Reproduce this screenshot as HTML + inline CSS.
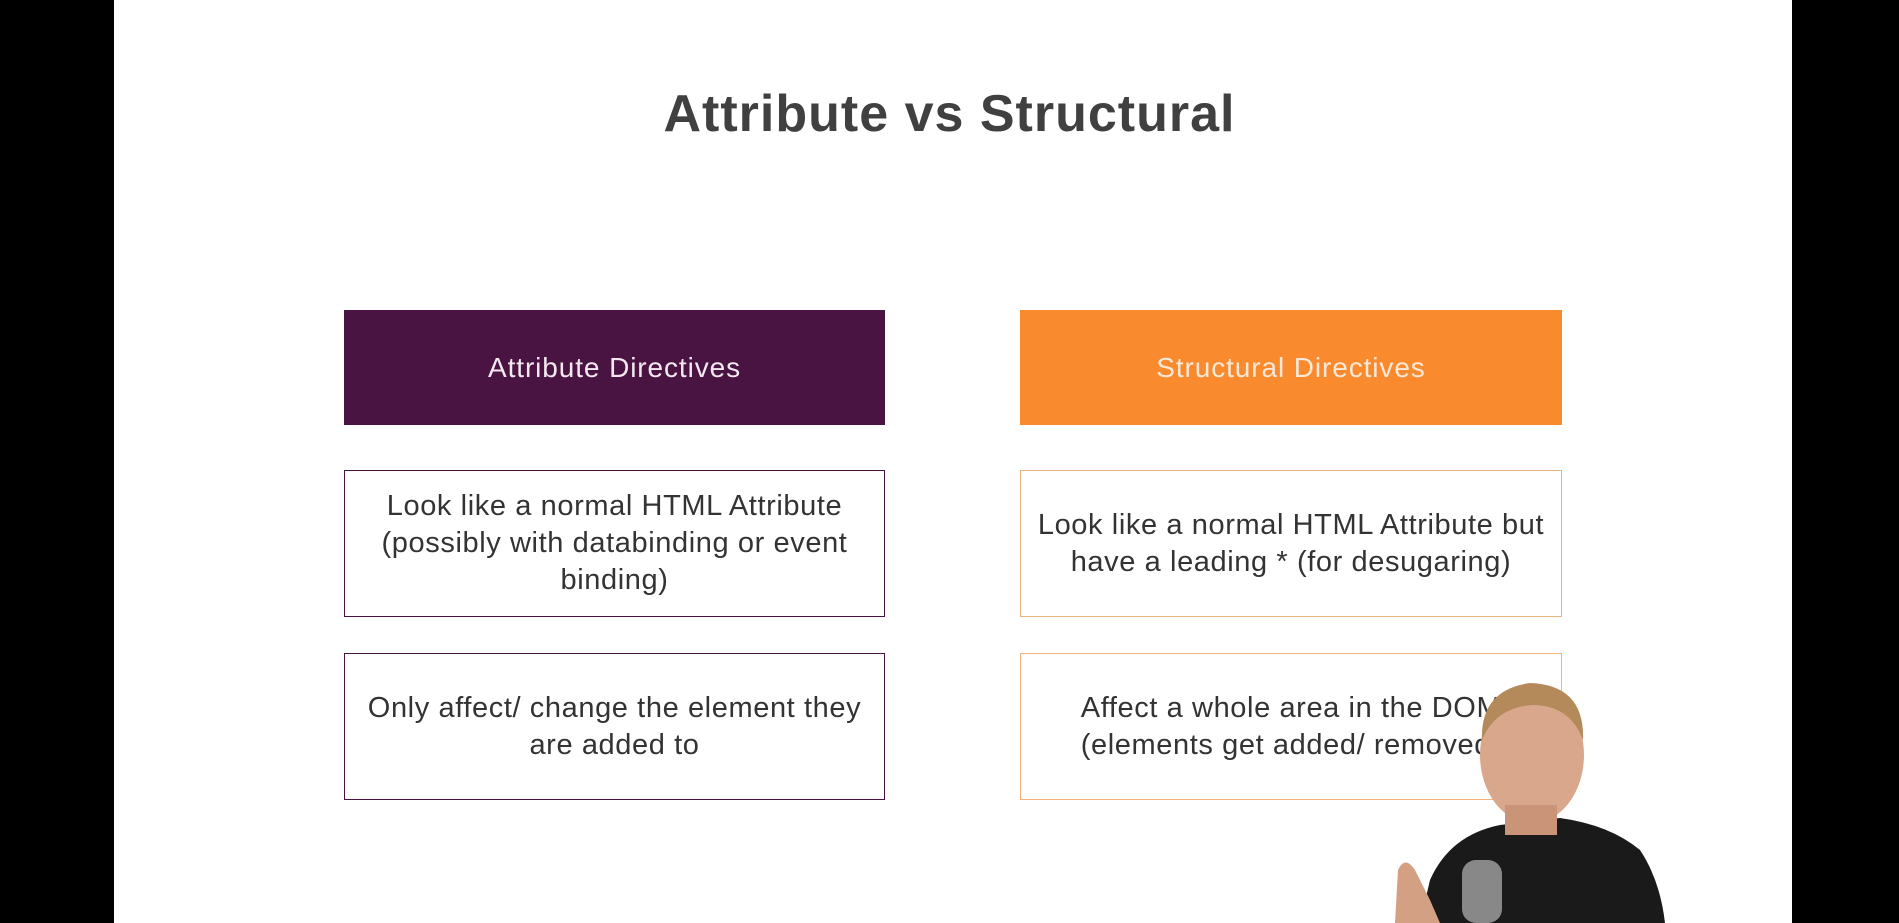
<!DOCTYPE html>
<html><head><meta charset="utf-8"><style>
*{margin:0;padding:0;box-sizing:border-box}
html,body{width:1899px;height:923px;overflow:hidden;background:#000}
.slide{position:absolute;left:114px;top:0;width:1678px;height:923px;background:#fff}
.t{position:absolute;left:0;width:1899px;top:84px;text-align:center;font:bold 52px "Liberation Sans",sans-serif;color:#404040;letter-spacing:1px}
.b{position:absolute;display:flex;align-items:center;justify-content:center;text-align:center;font:29px/37px "Liberation Sans",sans-serif;color:#333;letter-spacing:0.6px;white-space:nowrap}
.h{color:#f3e8f0;font-size:28px;letter-spacing:0.9px}
</style></head><body>
<div class="slide"></div>
<div class="t">Attribute vs Structural</div>
<div class="b h" style="left:344px;top:310px;width:541px;height:115px;background:#4a1442">Attribute Directives</div>
<div class="b h" style="left:1020px;top:310px;width:542px;height:115px;background:#f98a2e;color:#fde8d6">Structural Directives</div>
<div class="b" style="left:344px;top:470px;width:541px;height:147px;border:1.5px solid #4a1442">Look like a normal HTML Attribute<br>(possibly with databinding or event<br>binding)</div>
<div class="b" style="left:1020px;top:470px;width:542px;height:147px;border:1.5px solid #e8b482">Look like a normal HTML Attribute but<br>have a leading * (for desugaring)</div>
<div class="b" style="left:344px;top:653px;width:541px;height:147px;border:1.5px solid #4a1442">Only affect/ change the element they<br>are added to</div>
<div class="b" style="left:1020px;top:653px;width:542px;height:147px;border:1.5px solid #f4b27a">Affect a whole area in the DOM<br>(elements get added/ removed)</div>
<svg style="position:absolute;left:0;top:0" width="1899" height="923">
<path d="M1420 923 L1430 880 Q1450 835 1500 825 L1560 818 Q1610 825 1640 850 Q1660 880 1665 923 Z" fill="#1a1a1a"/>
<ellipse cx="1532" cy="755" rx="52" ry="68" fill="#d9a88c"/>
<path d="M1482 740 Q1480 690 1530 683 Q1585 685 1583 740 Q1570 705 1532 705 Q1495 708 1482 740Z" fill="#b58a5a"/>
<rect x="1505" y="805" width="52" height="30" fill="#c99478"/>
<rect x="1462" y="860" width="40" height="63" rx="14" fill="#888"/>
<path d="M1395 923 L1398 870 Q1405 855 1415 870 L1430 900 L1440 923Z" fill="#d4a084"/>
</svg>
</body></html>
